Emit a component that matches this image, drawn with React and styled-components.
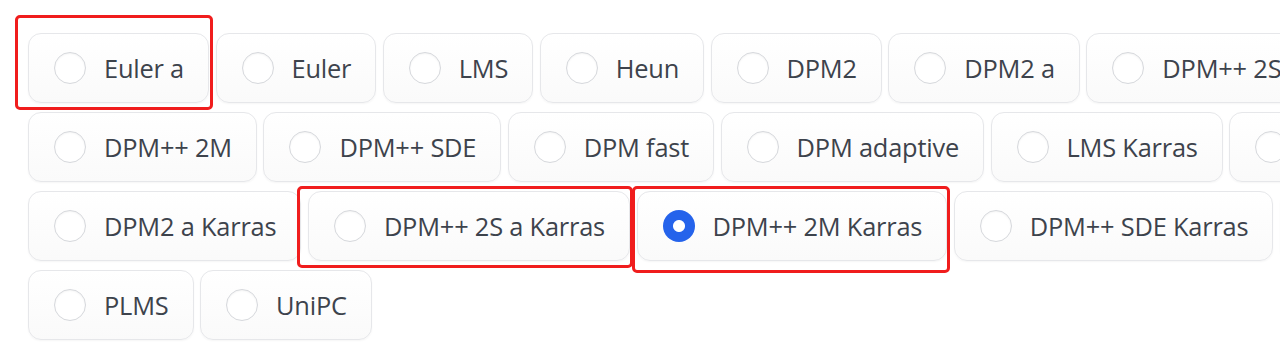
import React, { useState } from "react";
import styled, { createGlobalStyle } from "styled-components";

const Global = createGlobalStyle`
  html, body {
    margin: 0;
    padding: 0;
    background: #ffffff;
    overflow: hidden;
  }
  body {
    width: 1280px;
    height: 351px;
    font-family: "Open Sans", "Noto Sans", sans-serif;
  }
`;

const Page = styled.div`
  padding: 33px 0 0 28px;
`;

const Group = styled.div`
  display: flex;
  flex-wrap: wrap;
  width: 1500px;
  gap: 9px 6.5px;
`;

const Slot = styled.div`
  position: relative;
  display: flex;
`;

const Chip = styled.label`
  display: flex;
  align-items: center;
  box-sizing: border-box;
  height: 70px;
  padding: 0 24px 0 25px;
  gap: 18px;
  border: 1.5px solid #e6e7ea;
  border-radius: 13px;
  background: linear-gradient(180deg, #ffffff 0%, #fafafa 100%);
  box-shadow: 0 1px 2px rgba(0, 0, 0, 0.04);
  cursor: pointer;
  white-space: nowrap;
`;

const Dot = styled.span`
  flex: none;
  box-sizing: border-box;
  width: 32px;
  height: 32px;
  border-radius: 50%;
  border: ${(p) => (p.$checked ? "none" : "1.5px solid #d6d8dc")};
  background: ${(p) =>
    p.$checked
      ? "radial-gradient(circle, #ffffff 0 5.5px, #2563eb 6.5px)"
      : "#ffffff"};
  box-shadow: ${(p) =>
    p.$checked ? "none" : "inset 0 1px 2px rgba(0,0,0,0.05)"};
`;

const Text = styled.span`
  font-size: 25.4px;
  letter-spacing: -0.2px;
  color: #3d434c;
`;

const Highlight = styled.div`
  position: absolute;
  top: ${(p) => p.$t}px;
  left: ${(p) => p.$l}px;
  right: ${(p) => p.$r}px;
  bottom: ${(p) => p.$b}px;
  border: 3px solid #f01d1d;
  border-radius: 5px;
  pointer-events: none;
`;

const OPTIONS = [
  "Euler a",
  "Euler",
  "LMS",
  "Heun",
  "DPM2",
  "DPM2 a",
  "DPM++ 2S a",
  "DPM++ 2M",
  "DPM++ SDE",
  "DPM fast",
  "DPM adaptive",
  "LMS Karras",
  "DPM2 Karras",
  "DPM2 a Karras",
  "DPM++ 2S a Karras",
  "DPM++ 2M Karras",
  "DPM++ SDE Karras",
  "DDIM",
  "PLMS",
  "UniPC",
];

const HIGHLIGHTS = {
  "Euler a": { t: -18, l: -13, r: -4, b: -7 },
  "DPM++ 2S a Karras": { t: -5, l: -11, r: -3, b: -7 },
  "DPM++ 2M Karras": { t: -5, l: -5, r: -3, b: -12 },
};

export default function App() {
  const [value, setValue] = useState("DPM++ 2M Karras");
  return (
    <>
      <Global />
      <Page>
        <Group role="radiogroup">
          {OPTIONS.map((o) => {
            const h = HIGHLIGHTS[o];
            return (
              <Slot key={o}>
                <Chip onClick={() => setValue(o)}>
                  <Dot $checked={value === o} />
                  <Text>{o}</Text>
                </Chip>
                {h && <Highlight $t={h.t} $l={h.l} $r={h.r} $b={h.b} />}
              </Slot>
            );
          })}
        </Group>
      </Page>
    </>
  );
}
